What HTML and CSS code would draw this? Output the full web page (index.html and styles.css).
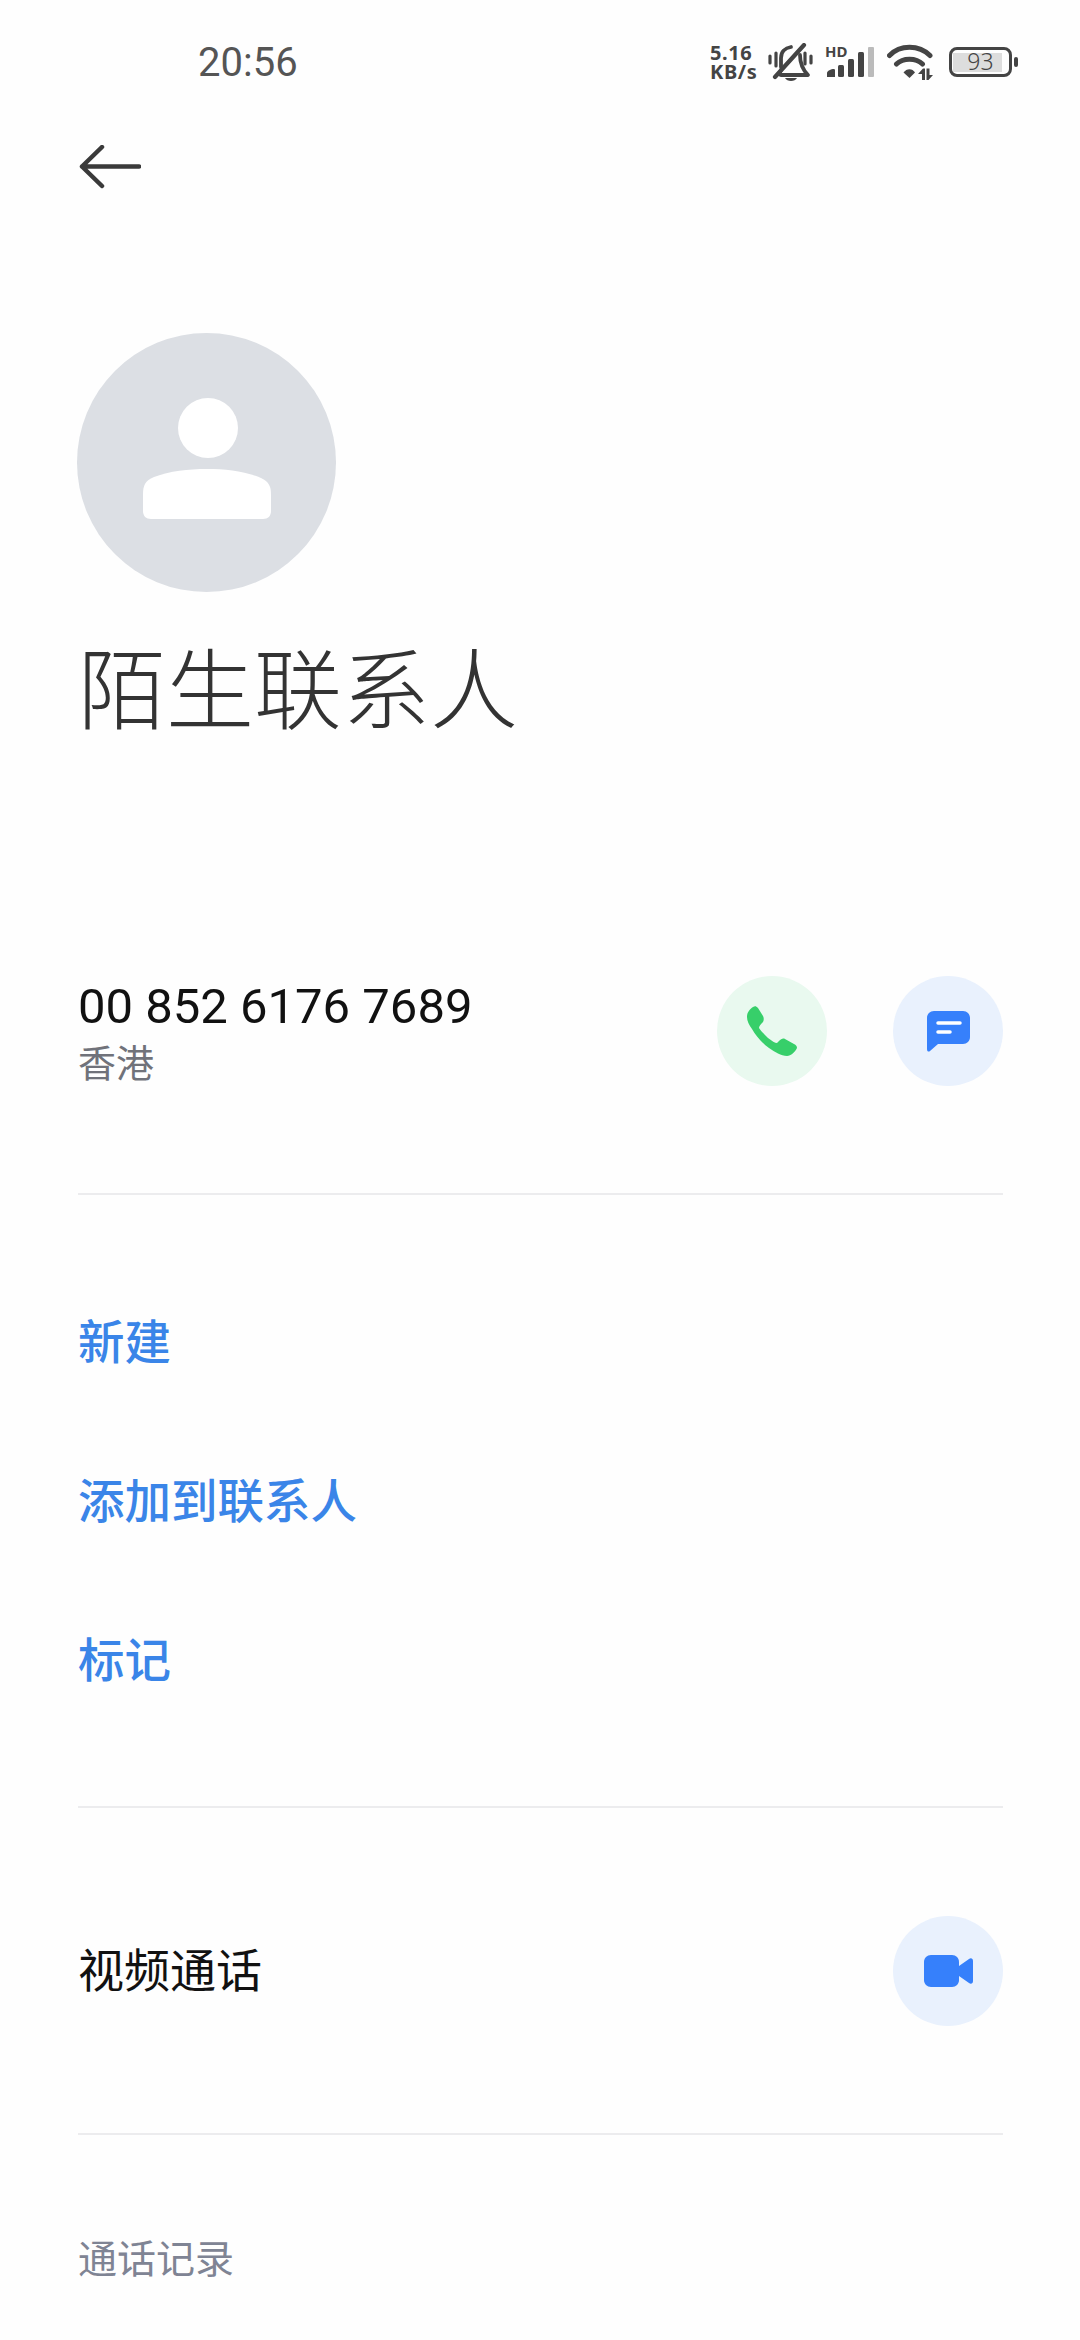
FILE: index.html
```html
<!DOCTYPE html>
<html lang="zh-CN">
<head>
  <meta charset="UTF-8">
  <meta name="viewport" content="width=device-width, initial-scale=1.0">
  <title>陌生联系人</title>
  <link rel="stylesheet" href="styles.css">
</head>
<body>
  <div class="status-bar">
    <span class="clock">20:56</span>
    <div class="status-icons">
      <div class="speed"><span>5.16</span><span>KB/s</span></div>
      <svg class="bell" width="45" height="39" viewBox="0 0 45 39">
        <path d="M13 24 V15 C13 9 17 5 23 4 M32 12 C32 22 35 27 40 32 H13 C11 32 12 29 13 27" fill="none" stroke="#444" stroke-width="3.8" stroke-linecap="round" stroke-linejoin="round"/>
        <path d="M7 34 L36 2" fill="none" stroke="#444" stroke-width="4.2" stroke-linecap="round"/>
        <path d="M17 35 H29 C27 39 19 39 17 35 Z" fill="#444"/>
        <path d="M2 13 V20 M8 10 V23 M37 10 V21 M43 13 V20" fill="none" stroke="#444" stroke-width="3.2" stroke-linecap="round"/>
      </svg>
      <div class="signal">
        <span class="hd">HD</span>
        <svg width="47" height="30" viewBox="0 0 47 30">
          <path d="M0 30 V26 C0 24 4 22 7 22 C8 22 8 23 8 24 V30 Z" fill="#444"/>
          <rect x="11" y="18" width="6" height="12" rx="1.5" fill="#444"/>
          <rect x="21" y="12" width="6" height="18" rx="1.5" fill="#444"/>
          <rect x="31" y="5" width="6" height="25" rx="1.5" fill="#444"/>
          <rect x="41" y="0" width="6" height="30" rx="1" fill="#bbb"/>
        </svg>
      </div>
      <svg class="wifi" width="46" height="36" viewBox="0 0 46 36">
        <path d="M2.5 11.5 C13 0.5 32 0.5 43 11.5 M9.5 20 C16 13.5 29 13.5 35.5 20" fill="none" stroke="#444" stroke-width="5" stroke-linecap="round"/>
        <path d="M16.5 28.5 C19.5 24 25.5 24 28 28.5 L22.5 34 Z" fill="#444"/>
        <path d="M31 30 L36 24.5 H38 V36 H35 V30 Z M39.5 24.5 H42.5 V31 H46 L41.5 36 H39.5 Z" fill="#444"/>
      </svg>
      <div class="battery">
        <div class="battery-body">93</div>
        <div class="battery-nub"></div>
      </div>
    </div>
  </div>

  <div class="back-row">
    <svg width="62" height="44" viewBox="0 0 62 44">
      <path d="M60 21.5 H3 M23 2 L3 21.5 L23 41" fill="none" stroke="#3a3a3a" stroke-width="4.5" stroke-linecap="round" stroke-linejoin="round"/>
    </svg>
  </div>

  <div class="content">
    <svg class="avatar" width="259" height="259" viewBox="0 0 259 259">
      <circle cx="129.5" cy="129.5" r="129.5" fill="#dcdfe4"/>
      <circle cx="131" cy="95" r="30" fill="#fff"/>
      <path d="M66 162 C66 152 68 148 77 144 C93 138 111 136 130 136 C149 136 168 138 184 145 C192 149 194 153 194 162 V178 C194 183 191 186 186 186 H74 C69 186 66 183 66 178 Z" fill="#fff"/>
    </svg>
    <h1 class="name">陌生联系人</h1>

    <div class="phone-row">
      <div class="phone-info">
        <div class="number">00 852 6176 7689</div>
        <div class="region">香港</div>
      </div>
      <div class="circle green">
        <svg width="50" height="50" viewBox="0 0 50 50">
          <path d="M6 1 C3 3 0 6 0 11 C0 15 2 19 5 23 C9 30 15 37 22 42 C28 46 34 50 40 50 C44 50 48 46 50 42 C50 40 49 39 47 38 L38 33 C36 32 34 33 32 35 L30 37 C28 37 25 35 21 32 C17 28 14 25 12 22 C12 20 14 18 16 16 C17 14 17 12 16 10 L11 2 C9 0 8 0 6 1 Z" fill="#37cf6a"/>
        </svg>
      </div>
      <div class="circle blue">
        <svg width="43" height="41" viewBox="0 0 43 41">
          <path d="M7 0 H36 C40 0 43 3 43 7 V26 C43 30 40 33 36 33 H11 L3 40 C2 41 0 41 0 38 V7 C0 3 3 0 7 0 Z" fill="#3680fb"/>
          <path d="M11 12 H33 M11 21 H23" fill="none" stroke="#fff" stroke-width="3.5" stroke-linecap="round"/>
        </svg>
      </div>
    </div>

    <div class="divider first"></div>

    <div class="actions">
      <div class="action">新建</div>
      <div class="action">添加到联系人</div>
      <div class="action">标记</div>
    </div>

    <div class="divider"></div>

    <div class="video-row">
      <div class="video-label">视频通话</div>
      <div class="circle blue">
        <svg width="49" height="32" viewBox="0 0 49 32">
          <path d="M7 0 H28 C32 0 35 3 35 7 V25 C35 29 32 32 28 32 H7 C3 32 0 29 0 25 V7 C0 3 3 0 7 0 Z" fill="#3680fb"/>
          <path d="M35 11 L45 4 C47 2.5 49 3.5 49 6 V26 C49 28.5 47 29.5 45 28 L35 21 Z" fill="#3680fb"/>
        </svg>
      </div>
    </div>

    <div class="divider"></div>

    <div class="section-label">通话记录</div>
  </div>
</body>
</html>
```

FILE: styles.css
```css
* {
  box-sizing: border-box;
}
html, body {
  margin: 0;
  padding: 0;
}
body {
  width: 1080px;
  height: 2340px;
  overflow: hidden;
  background: #fefefe;
  font-family: "Noto Sans CJK SC", "Noto Sans", sans-serif;
}

/* status bar */
.status-bar {
  height: 124px;
  padding: 0 62px 0 198px;
  display: flex;
  align-items: center;
  justify-content: space-between;
}
.clock {
  font-family: Roboto, sans-serif;
  font-size: 40px;
  color: #555;
}
.status-icons {
  display: flex;
  align-items: center;
}
.speed {
  display: flex;
  flex-direction: column;
  width: 50px;
  margin-right: 8px;
  font-family: "Noto Sans", sans-serif;
  font-size: 20px;
  font-weight: 700;
  letter-spacing: 0.6px;
  line-height: 19px;
  color: #444;
}
.bell {
  margin-right: 14px;
}
.signal {
  width: 48px;
  height: 30px;
  margin-right: 12px;
  position: relative;
}
.signal svg {
  display: block;
}
.hd {
  position: absolute;
  left: -2px;
  top: -3px;
  font-family: "Noto Sans", sans-serif;
  font-size: 15px;
  font-weight: 700;
  line-height: 15px;
  color: #444;
}
.wifi {
  margin-right: 16px;
}
.battery {
  display: flex;
  align-items: center;
  gap: 2px;
}
.battery-body {
  width: 63px;
  height: 30px;
  border: 3.5px solid #444;
  border-radius: 8px;
  background: linear-gradient(#ddd, #ddd) no-repeat 1px center / 49px 19px;
  font-family: "Noto Sans", sans-serif;
  font-size: 23px;
  font-weight: 300;
  line-height: 23px;
  color: #444;
  text-align: center;
}
.battery-nub {
  width: 4px;
  height: 10px;
  border-radius: 2px;
  background: #444;
}

.back-row {
  height: 86px;
  padding-left: 79px;
  display: flex;
  align-items: center;
}

/* main column */
.content {
  padding: 123px 77px 0 78px;
}
.avatar {
  display: block;
  margin-left: -1px;
}
.name {
  margin: 36px 0 0;
  height: 112px;
  font-size: 88px;
  font-weight: 300;
  line-height: 112px;
  color: #333;
}
.phone-row {
  margin-top: 236px;
  height: 110px;
  display: flex;
  align-items: center;
  gap: 66px;
}
.phone-info {
  flex: 1;
  padding-bottom: 3px;
}
.number {
  font-family: Roboto, sans-serif;
  font-size: 49px;
  line-height: 62px;
  color: #111;
}
.region {
  font-size: 38px;
  line-height: 46px;
  color: #70727a;
}
.circle {
  width: 110px;
  height: 110px;
  border-radius: 50%;
  flex: none;
  display: flex;
  align-items: center;
  justify-content: center;
}
.green {
  background: #e9f9ef;
}
.blue {
  background: #e9f1fd;
}
.divider {
  height: 2px;
  background: #ececee;
}
.divider.first {
  margin-top: 107px;
}
.actions {
  padding: 64px 0 70px;
}
.action {
  height: 159px;
  display: flex;
  align-items: center;
  font-size: 46.5px;
  font-weight: 500;
  color: #3a85e8;
}
.video-row {
  height: 325px;
  display: flex;
  align-items: center;
  justify-content: space-between;
}
.video-label {
  padding-bottom: 8px;
  font-size: 46px;
  color: #111;
}
.section-label {
  margin-top: 91px;
  font-size: 39px;
  line-height: 60px;
  color: #7f8494;
}
```
